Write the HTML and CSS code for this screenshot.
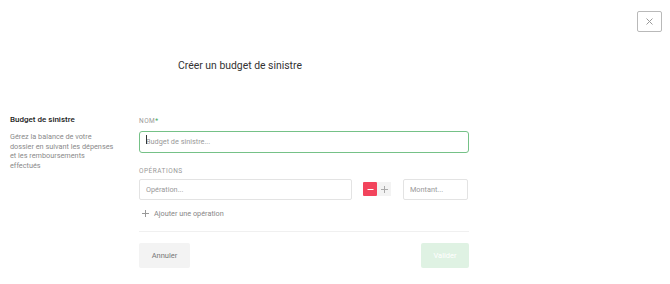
FILE: index.html
```html
<!DOCTYPE html>
<html lang="fr">
<head>
    <meta charset="UTF-8">
    <meta name="viewport" content="width=device-width, initial-scale=1.0">
    <title>Créer un budget de sinistre</title>
    <link rel="stylesheet" href="styles.css">
</head>
<body>
    <div class="modal">
        <div class="topbar">
            <button class="close" type="button" aria-label="Fermer">
                <svg width="7" height="7" viewBox="0 0 7 7"><path d="M0.5 0.5L6.5 6.5M6.5 0.5L0.5 6.5" stroke="#9a9a9a" stroke-width="1" fill="none"/></svg>
            </button>
        </div>

        <h1 class="title">Créer un budget de sinistre</h1>

        <div class="content">
            <div class="aside">
                <h2>Budget de sinistre</h2>
                <p>Gérez la balance de votre dossier en suivant les dépenses et les remboursements effectués</p>
            </div>

            <form class="form">
                <label class="label">Nom<span class="req">*</span></label>
                <div class="focused">
                    <input class="input input-name" type="text" placeholder="Budget de sinistre...">
                </div>

                <label class="label label-ops">Opérations</label>
                <div class="op-row">
                    <input class="input input-op" type="text" placeholder="Opération...">
                    <div class="sign">
                        <button class="sign-btn minus" type="button">
                            <svg width="7" height="7" viewBox="0 0 7 7"><path d="M0.5 3.5H6.5" stroke="#fff" stroke-width="1"/></svg>
                        </button>
                        <button class="sign-btn plus" type="button">
                            <svg width="7" height="7" viewBox="0 0 7 7"><path d="M0 3.5H7M3.5 0V7" stroke="#aaa" stroke-width="1"/></svg>
                        </button>
                    </div>
                    <input class="input input-amount" type="text" placeholder="Montant...">
                </div>

                <div class="add-op">
                    <svg width="7" height="7" viewBox="0 0 7 7"><path d="M0 3.5H7M3.5 0V7" stroke="#999" stroke-width="1"/></svg>
                    <span>Ajouter une opération</span>
                </div>

                <div class="actions">
                    <button class="btn btn-cancel" type="button">Annuler</button>
                    <button class="btn btn-submit" type="submit">Valider</button>
                </div>
            </form>
        </div>
    </div>
</body>
</html>
```

FILE: styles.css
```css
body {
    margin: 0;
    padding: 0;
    background: #fff;
    font-family: Roboto, "Liberation Sans", sans-serif;
}
.modal {
    width: 670px;
    height: 284px;
    overflow: hidden;
}
.topbar {
    display: flex;
    justify-content: flex-end;
    padding: 11px 8px 0 0;
}
.close {
    width: 25px;
    height: 21px;
    padding: 0;
    border: 1px solid #b9b9b9;
    border-radius: 2px;
    background: #fff;
    display: flex;
    align-items: center;
    justify-content: center;
}
.title {
    width: 480px;
    margin: 26px 0 0;
    text-align: center;
    font-size: 10.4px;
    font-weight: 400;
    line-height: 16px;
    color: #333;
}
.content {
    display: flex;
    margin-top: 40px;
}
.aside {
    width: 139px;
    box-sizing: border-box;
    padding: 0 10px;
}
.aside h2 {
    margin: 0 0 7px;
    font-size: 8px;
    font-weight: 500;
    line-height: 11px;
    color: #222;
}
.aside p {
    width: 106px;
    margin: 0;
    font-size: 7.3px;
    line-height: 9.7px;
    color: #8a8a8a;
}
.form {
    width: 330px;
    margin: 0;
}
.label {
    display: block;
    font-size: 6.5px;
    line-height: 8px;
    letter-spacing: 0.5px;
    text-transform: uppercase;
    color: #999;
    margin: 3px 0 4px;
}
.req {
    color: #3daa5a;
}
.label-ops {
    margin-top: 14px;
}
.input {
    box-sizing: border-box;
    height: 21px;
    padding: 0 6px;
    border: 1px solid #e3e3e3;
    border-radius: 2px;
    font-family: Roboto, sans-serif;
    font-size: 7.3px;
    color: #333;
    outline: none;
    background: #fff;
}
.input::placeholder {
    color: #999;
}
.focused {
    position: relative;
}
.focused::after {
    content: "";
    position: absolute;
    left: 7px;
    top: 6px;
    width: 1px;
    height: 9px;
    background: #333;
}
.input-name {
    width: 330px;
    height: 22px;
    border-color: #75c187;
    border-radius: 3px;
}
.op-row {
    display: flex;
    align-items: center;
}
.input-op {
    width: 213px;
}
.sign {
    display: flex;
    margin: 0 12px 0 11px;
}
.sign-btn {
    width: 14px;
    height: 14px;
    padding: 0;
    border: none;
    display: flex;
    align-items: center;
    justify-content: center;
}
.minus {
    background: #f2445c;
    border-radius: 1px;
}
.plus {
    background: #f3f3f3;
}
.input-amount {
    width: 65px;
}
.add-op {
    display: flex;
    align-items: center;
    gap: 5px;
    margin: 9px 0 0 3px;
    font-size: 7.3px;
    line-height: 10px;
    color: #888;
}
.actions {
    display: flex;
    justify-content: space-between;
    margin-top: 12px;
    padding-top: 11px;
    border-top: 1px solid #f0f0f0;
}
.btn {
    height: 25px;
    padding: 0;
    border: none;
    border-radius: 2px;
    font-family: Roboto, sans-serif;
    font-size: 7.5px;
}
.btn-cancel {
    width: 51px;
    background: #f3f3f3;
    color: #777;
}
.btn-submit {
    width: 48px;
    background: #dff2e3;
    color: #fff;
}
```
